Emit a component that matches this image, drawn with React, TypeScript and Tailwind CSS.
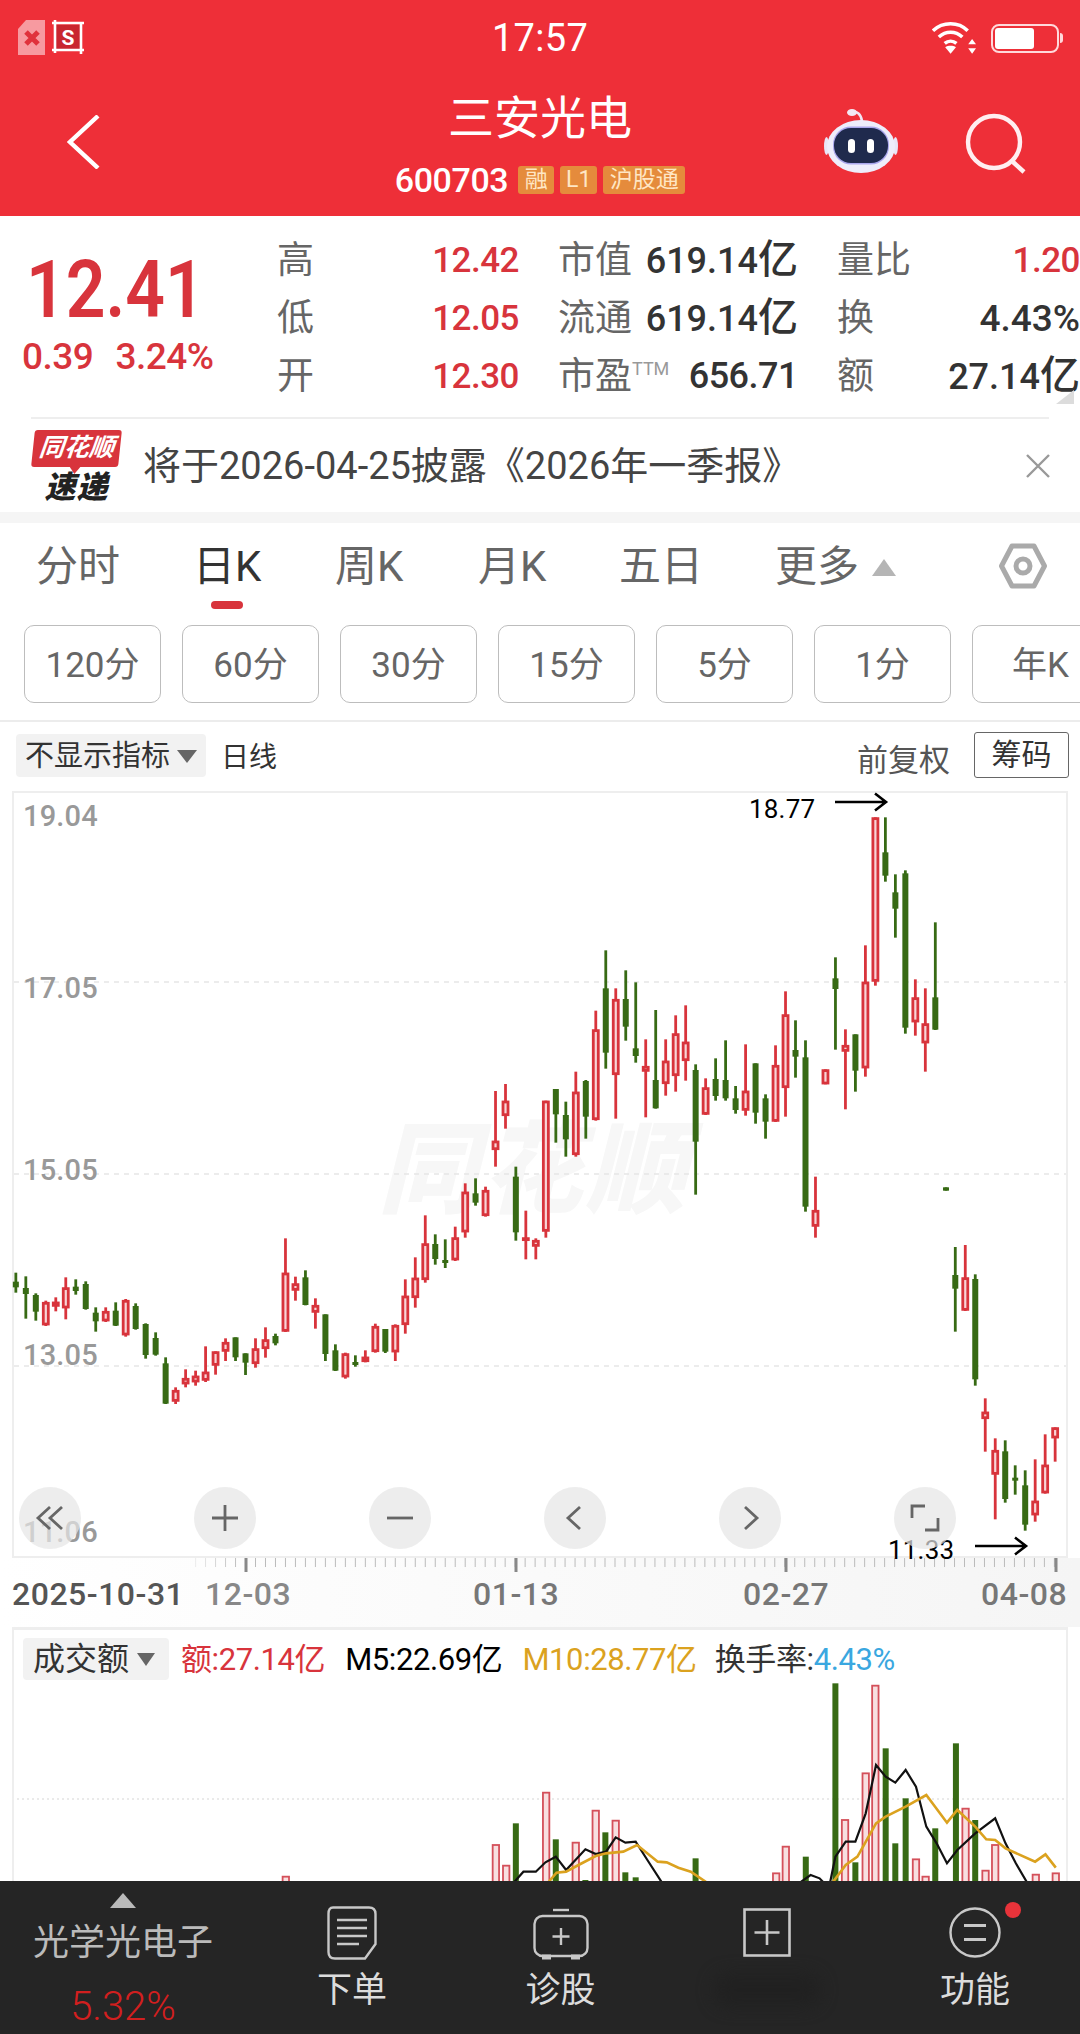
import React from "react";

type C = [number, "r" | "g", number, number, number, number];

// left part of the series, measured on the crop starting at y=1180
const A: C[] = [
  [46,"g",278,305,322,338],[75,"g",289,324,342,416],[104,"g",340,345,395,422],[133,"r",362,366,436,438],
  [162,"r",352,365,380,394],[191,"r",292,322,385,418],[220,"g",298,320,333,344],[249,"g",304,312,387,389],
  [278,"g",382,398,424,455],[307,"r",382,393,424,426],[336,"g",367,392,437,438],[365,"r",357,360,466,470],
  [394,"g",370,378,447,449],[423,"g",430,432,525,536],[452,"g",457,474,524,527],[481,"g",532,550,671,672],
  [510,"r",622,630,665,672],[539,"r",568,594,613,622],[568,"r",572,587,607,617],[597,"r",499,575,602,606],
  [626,"r",514,514,557,584],[655,"r",475,486,515,543],[684,"g",472,472,532,543],[713,"g",520,520,548,585],
  [742,"r",475,505,552,563],[771,"r",442,478,507,533],[800,"g",461,468,490,496],[829,"r",175,278,455,456],
  [858,"r",290,310,332,362],[887,"g",271,292,375,376],[916,"r",355,375,398,446],[945,"g",403,403,522,543],
  [974,"g",493,511,572,573],[1003,"r",518,520,592,596],[1032,"g",526,546,552,560],[1061,"r",511,530,546,547],
  [1090,"r",431,438,516,518],[1119,"g",447,447,515,519],[1148,"r",433,435,517,543],[1177,"r",298,347,435,461],
  [1206,"r",232,293,354,383],[1235,"r",106,190,300,308],[1264,"g",163,192,237,254],[1293,"g",178,240,247,264],
  [1322,"r",140,172,241,243],[1351,"r",10,35,157,173],[1381,"g",-5,40,68,77],[1410,"r",20,30,108,110],
  [1439,"r",-267,-118,-90,-40],[1468,"r",-288,-238,-192,-154],[1498,"g",-40,-10,157,182],[1527,"r",92,172,182,238],
  [1556,"r",175,180,200,238],
];

// right part of the series, measured on the crop starting at x=540, y=780
const B: C[] = [
  [17,"r",962,962,1355,1373],[46,"g",927,927,1003,1088],[75,"g",965,1005,1078,1130],[104,"r",875,935,1125,1130],
  [133,"g",900,903,1010,1076],[162,"r",692,748,1020,1022],[191,"g",511,625,818,866],[220,"r",625,657,885,1016],
  [249,"g",571,657,740,782],[278,"g",607,805,828,848],[307,"r",778,858,875,1012],[336,"g",690,900,985,986],
  [365,"r",778,842,912,947],[394,"r",706,760,888,935],[423,"r",676,785,843,902],[452,"g",853,870,1085,1244],
  [481,"r",895,922,1004,1005],[510,"g",835,897,948,962],[539,"g",781,900,955,962],[568,"g",918,955,990,1001],
  [597,"r",793,932,992,1007],[626,"g",850,850,998,1031],[655,"g",943,955,1025,1076],[684,"r",796,855,1025,1026],
  [713,"r",634,703,924,1010],[742,"g",721,810,830,893],[771,"g",781,832,1280,1295],[800,"r",1190,1290,1340,1373],
  [829,"r",868,868,913,913],[858,"g",532,595,627,809],[887,"r",748,795,815,988],[916,"g",763,763,872,935],
  [945,"r",496,605,865,890],[974,"r",112,112,605,617],[1003,"g",112,217,287,305],[1032,"g",283,337,386,473],
  [1061,"g",271,280,743,761],[1090,"r",598,652,727,767],[1119,"r",625,730,790,875],[1148,"g",427,652,749,750],
  [1179,"g",1222,1222,1232,1232],[1206,"g",1401,1485,1526,1655],[1235,"r",1395,1492,1592,1593],[1264,"g",1483,1497,1798,1817],
  [1293,"r",1855,1895,1917,2015],[1322,"r",1975,2010,2084,2218],[1351,"g",1981,2014,2157,2168],[1380,"g",2056,2093,2102,2144],
  [1409,"g",2071,2116,2234,2252],[1438,"r",2038,2162,2206,2225],[1467,"r",1963,2054,2140,2141],[1496,"r",1942,1942,1975,2045],
];

const RED = "#d8343c";
const GREEN = "#376a14";

function Candle({ x, t, hi, top, bot, lo }: { x: number; t: "r" | "g"; hi: number; top: number; bot: number; lo: number }) {
  const col = t === "r" ? RED : GREEN;
  return (
    <g>
      <line x1={x} x2={x} y1={hi} y2={lo} stroke={col} strokeWidth={2.8} />
      {t === "r" ? (
        <rect x={x - 2.5} y={top + 1.3} width={5} height={Math.max(bot - top - 2.6, 1)} fill="#f9d5d7" stroke={col} strokeWidth={2.8} />
      ) : (
        <rect x={x - 3} y={top} width={6} height={Math.max(bot - top, 3)} fill={col} />
      )}
    </g>
  );
}

const Chev = ({ d }: { d: string }) => (
  <svg width="30" height="30" viewBox="0 0 30 30" fill="none" stroke="#666" strokeWidth="2.8">
    <path d={d} />
  </svg>
);

function RoundBtn({ left, children }: { left: number; children: React.ReactNode }) {
  return (
    <div
      className="absolute top-[696px] flex h-[62px] w-[62px] items-center justify-center rounded-full bg-[#e6e6e6]/70"
      style={{ left: left - 31 }}
    >
      {children}
    </div>
  );
}

function Arrow({ x, y }: { x: number; y: number }) {
  return (
    <svg className="absolute" style={{ left: x, top: y - 10 }} width="54" height="20" viewBox="0 0 54 20" fill="none" stroke="#000" strokeWidth="2.6">
      <path d="M0 10H50M40 1.5L51 10L40 18.5" />
    </svg>
  );
}

function Cell({ label, value, w, valueCls }: { label: React.ReactNode; value: string; w: string; valueCls: string }) {
  const hasYi = value.endsWith("亿");
  return (
    <div className={`flex items-center justify-between ${w}`}>
      <span className="text-[37px] leading-none text-[#666]">{label}</span>
      <span className={`flex items-baseline leading-none font-medium ${valueCls}`}>
        {hasYi ? value.slice(0, -1) : value}
        {hasYi && <span className="text-[40px] leading-none">亿</span>}
      </span>
    </div>
  );
}

const PriceLabel = ({ top, children }: { top: number; children: string }) => (
  <div className="absolute left-[23px] text-[29px] leading-none font-medium tracking-[0.2px] text-[#999]" style={{ top }}>
    {children}
  </div>
);

const DateLabel = ({ left, cls, children }: { left: number; cls: string; children: string }) => (
  <div className={`absolute top-[787px] text-[32px] leading-none tracking-[0.5px] ${cls}`} style={{ left }}>
    {children}
  </div>
);

const majorTicks = [246, 516, 786, 1056];
const ticks = Array.from({ length: 105 }, (_, i) => 15.84 + 9.986 * i).filter((x) => x > 186 && x < 1062);

const volRed: [number, number][] = [[415,830],[720,735],[735,797],[793,578],[836,728],[865,632],[894,662],[1127,820],[1141,740],[1227,660],[1257,520],[1271,257],[1330,778],[1344,830],[1402,626],[1431,812],[1445,735],[1504,824],[1533,820]];
const volGreen: [number, number][] = [[749,670],[807,718],[850,840],[879,697],[908,817],[923,832],[1010,775],[1170,770],[1213,250],[1242,787],[1286,445],[1300,730],[1315,595],[1358,685],[1388,430],[1416,660]];
const pts = (a: number[][]) => a.map(([x, y]) => `${x / 1.452},${1600 + y / 3}`).join(" ");
const blackA = [[745,850],[760,815],[778,815],[792,787],[807,770],[822,810],[850,748],[865,762],[880,755],[894,712],[908,728],[923,725],[940,780],[965,860]];
const blackB = [[1160,850],[1177,825],[1190,835],[1197,850]];
const blackC = [[1205,850],[1213,770],[1228,725],[1242,725],[1257,640],[1272,495],[1286,530],[1300,548],[1315,510],[1330,560],[1345,680],[1360,730],[1375,790],[1390,750],[1416,700],[1445,655],[1460,730],[1475,790],[1492,850]];
const orangeA = [[795,850],[808,818],[822,815],[840,795],[865,768],[880,760],[905,755],[925,735],[955,785],[968,787],[985,803],[1003,815],[1028,850]];
const orangeB = [[1208,850],[1228,795],[1245,770],[1272,670],[1286,650],[1315,620],[1345,585],[1375,668],[1390,630],[1416,680],[1432,718],[1445,720],[1460,745],[1503,785],[1518,763],[1533,803]];

const intervals = ["120分", "60分", "30分", "15分", "5分", "1分", "年K"];

export default function App() {
  return (
    <div className="relative flex h-[2034px] w-[1080px] flex-col overflow-hidden bg-white font-[Roboto,'Noto_Sans_CJK_SC',sans-serif]">
      {/* header */}
      <header className="h-[216px] shrink-0 bg-[#ee2f38] text-white">
        <div className="flex h-[76px] items-center justify-between">
          <div className="flex w-[220px] items-center pl-[18px]">
            <svg width="66" height="36" viewBox="0 0 66 36">
              <path d="M8 0H27V35H0V9Z" fill="#f79aa0" />
              <path d="M8 12L20 24M20 12L8 24" stroke="#e0323c" strokeWidth="5" fill="none" />
              <rect x="37" y="5" width="26" height="25" fill="#c9262f" />
              <path d="M34 3H66M37 0V33M34 30H66M63 3V34" stroke="#fff" strokeWidth="2.6" fill="none" />
              <text x="50" y="25" fontSize="21" fontWeight="700" fill="#fff" textAnchor="middle" fontFamily="Roboto">S</text>
            </svg>
          </div>
          <div className="text-[38px] leading-none tracking-[0.3px]">17:57</div>
          <div className="flex w-[220px] items-center justify-end gap-[14px] pr-[17px]">
            <svg width="45" height="34" viewBox="0 0 46 34" fill="none" stroke="#fff" strokeWidth="3.6">
              <path d="M1 9.5C11 0 27 0 36.5 9.5" />
              <path d="M7 16C14 9.5 24 9.5 31 16" />
              <path d="M13 22.5C16.5 19.5 21.5 19.5 25 22.5" />
              <path d="M19 33L13.5 26.5C16.5 24.5 21.5 24.5 24.5 26.5Z" fill="#fff" stroke="none" />
              <path d="M41 18L37 23.5H45Z M41 33L37 27.5H45Z" fill="#fff" stroke="none" />
            </svg>
            <div className="flex items-center">
              <div className="h-[29px] w-[68px] rounded-[8px] border-[2px] border-[#ffd9db] p-[2px]">
                <div className="h-full w-[39px] rounded-[3px] bg-white" />
              </div>
              <div className="ml-[1px] h-[10px] w-[3px] rounded-r bg-[#ffd9db]" />
            </div>
          </div>
        </div>
        <div className="grid h-[140px] grid-cols-[1fr_auto_1fr]">
          <div className="pt-[39px] pl-[67px]">
            <svg width="34" height="54" viewBox="0 0 34 54" fill="none" stroke="#fff" strokeWidth="4.4">
              <path d="M31 1L3 27L31 53" />
            </svg>
          </div>
          <div className="flex flex-col items-center pt-[17px]">
            <div className="text-[46px] leading-[50px]">三安光电</div>
            <div className="mt-[23px] flex items-center">
              <span className="text-[34px] leading-[28px] font-medium tracking-[-0.4px]">600703</span>
              <div className="ml-[10px] flex gap-[6px] text-[23px] leading-[28px] text-[#ffe6c4]">
                <span className="w-[36px] rounded-[3px] bg-[#e58b3c] text-center">融</span>
                <span className="w-[37px] rounded-[3px] bg-[#e58b3c] text-center">L1</span>
                <span className="w-[82px] rounded-[3px] bg-[#e58b3c] text-center">沪股通</span>
              </div>
            </div>
          </div>
          <div className="flex justify-end pt-[32px] pr-[54px]">
            <svg width="76" height="68" viewBox="0 0 76 68" className="mr-[63px]">
              <path d="M39 13C38 6 34 3 29 4" stroke="#f1e6f4" strokeWidth="2.5" fill="none" />
              <ellipse cx="29" cy="4.5" rx="5" ry="3.5" fill="#f3e8f3" />
              <ellipse cx="3.5" cy="38" rx="2.5" ry="9" fill="#e9e5f7" />
              <ellipse cx="72.5" cy="38" rx="2.5" ry="9" fill="#e9e5f7" />
              <ellipse cx="38" cy="38.5" rx="34" ry="26.5" fill="#eeedfb" />
              <rect x="10" y="18.5" width="56" height="38" rx="18" fill="#a9a6ec" />
              <rect x="11" y="20" width="54" height="35" rx="17" fill="#1f2a4d" />
              <rect x="25" y="31" width="7" height="14" rx="3.5" fill="#fff" />
              <rect x="44" y="31" width="7" height="14" rx="3.5" fill="#fff" />
            </svg>
            <svg width="64" height="66" viewBox="0 0 64 66" fill="none" stroke="#ffeef0" strokeWidth="4.4" className="mt-[4px]">
              <circle cx="32" cy="30" r="26" />
              <path d="M51 50L62 60" />
            </svg>
          </div>
        </div>
      </header>

      {/* quote */}
      <section className="relative h-[201px] shrink-0">
        <div className="flex">
          <div className="w-[277px] shrink-0 pt-[37px]">
            <div className="ml-[26px] origin-left scale-x-[0.87] text-[80px] leading-[74px] font-semibold text-[#d8343c]">12.41</div>
            <div className="mt-[12px] ml-[22px] flex gap-[22px] text-[37px] leading-[36px] font-medium tracking-[-0.5px] text-[#d8343c]">
              <span>0.39</span>
              <span>3.24%</span>
            </div>
          </div>
          <div className="flex flex-col pt-[15px]">
            <div className="flex h-[58px] gap-[39px]">
              <Cell label="高" value="12.42" w="w-[242px]" valueCls="text-[35px] tracking-[-0.5px] text-[#d8343c]" />
              <Cell label="市值" value="619.14亿" w="w-[240px]" valueCls="text-[36px] text-[#333]" />
              <Cell label="量比" value="1.20" w="w-[243px]" valueCls="text-[35px] tracking-[-0.5px] text-[#d8343c]" />
            </div>
            <div className="flex h-[58px] gap-[39px]">
              <Cell label="低" value="12.05" w="w-[242px]" valueCls="text-[35px] tracking-[-0.5px] text-[#d8343c]" />
              <Cell label="流通" value="619.14亿" w="w-[240px]" valueCls="text-[36px] text-[#333]" />
              <Cell label="换" value="4.43%" w="w-[243px]" valueCls="text-[37px] text-[#333]" />
            </div>
            <div className="flex h-[58px] gap-[39px]">
              <Cell label="开" value="12.30" w="w-[242px]" valueCls="text-[35px] tracking-[-0.5px] text-[#d8343c]" />
              <Cell
                label={
                  <span className="flex items-start">
                    市盈<span className="mt-[2px] text-[18px] leading-none text-[#999]">TTM</span>
                  </span>
                }
                value="656.71"
                w="w-[240px]"
                valueCls="text-[36px] tracking-[-0.5px] text-[#333]"
              />
              <Cell label="额" value="27.14亿" w="w-[243px]" valueCls="text-[36px] text-[#333]" />
            </div>
          </div>
        </div>
        <div className="absolute top-[174px] right-[6px] h-0 w-0 border-b-[14px] border-l-[18px] border-b-[#dcdcdc] border-l-transparent" />
      </section>

      <div className="mx-[31px] h-[2px] shrink-0 bg-[#eeeeee]" />

      {/* notice */}
      <section className="flex h-[93px] shrink-0 items-center pl-[33px]">
        <div className="flex w-[87px] shrink-0 flex-col items-center">
          <div className="relative h-[37px] w-[87px] -skew-x-6 rounded-[3px] bg-[#d8343c] text-center text-[25px] leading-[36px] font-bold text-white italic">
            同花顺
            <div className="absolute top-[36px] left-[38px] h-0 w-0 border-x-[6px] border-t-[8px] border-x-transparent border-t-[#d8343c]" />
          </div>
          <div className="mt-[7px] text-[31px] leading-[27px] font-black tracking-[1px] text-[#222] italic">速递</div>
        </div>
        <div className="ml-[23px] text-[38px] leading-none text-[#444]">将于2026-04-25披露《2026年一季报》</div>
        <svg className="mr-[30px] ml-auto" width="24" height="24" viewBox="0 0 24 24" fill="none" stroke="#999" strokeWidth="2.4">
          <path d="M1 1L23 23M23 1L1 23" />
        </svg>
      </section>

      <div className="h-[11px] shrink-0 bg-[#f5f5f5]" />

      {/* tabs */}
      <section className="flex h-[102px] shrink-0 items-start pt-[23px] pl-[36px] text-[42px] leading-[42px] text-[#666]">
        <div className="w-[157px]">分时</div>
        <div className="relative w-[142px] text-[#333]">
          日K
          <div className="absolute top-[55px] left-[18px] h-[8px] w-[32px] rounded-full bg-[#d8343c]" />
        </div>
        <div className="w-[143px]">周K</div>
        <div className="w-[141px]">月K</div>
        <div className="w-[156px]">五日</div>
        <div className="flex items-center">
          更多
          <div className="ml-[13px] h-0 w-0 border-x-[12px] border-b-[17px] border-x-transparent border-b-[#b5b5b5]" />
        </div>
        <svg className="mt-[-3px] ml-[103px]" width="48" height="46" viewBox="0 0 48 46" fill="none" stroke="#aaa" strokeWidth="5">
          <path d="M13 3H35L45.5 23L35 43H13L2.5 23Z" strokeLinejoin="round" />
          <circle cx="24" cy="23" r="7" />
        </svg>
      </section>

      {/* intervals */}
      <section className="flex h-[78px] shrink-0 gap-[21px] overflow-hidden pl-[24px]">
        {intervals.map((t) => (
          <div key={t} className="flex h-[78px] w-[137px] shrink-0 items-center justify-center rounded-[10px] border border-[#bdbdbd] pt-[2px] text-[35px] leading-none text-[#666]">
            {t}
          </div>
        ))}
      </section>

      <div className="mt-[17px] h-[2px] shrink-0 bg-[#ececec]" />

      {/* toolbar */}
      <section className="flex h-[69px] shrink-0 items-start pt-[12px] pr-[11px] pl-[16px]">
        <div className="flex h-[43px] w-[190px] items-center justify-center gap-[7px] rounded-[4px] bg-[#f2f2f2] pt-[1px] text-[29px] leading-none text-[#333]">
          不显示指标
          <div className="h-0 w-0 border-x-[10px] border-t-[13px] border-x-transparent border-t-[#666]" />
        </div>
        <div className="ml-[15px] pt-[1px] text-[28px] leading-[45px] text-[#333]">日线</div>
        <div className="mt-[4px] ml-auto text-[31px] leading-[45px] text-[#555]">前复权</div>
        <div className="mt-[-2px] ml-[24px] flex h-[46px] w-[95px] items-center justify-center rounded-[3px] border border-[#666] text-[30px] leading-none text-[#333]">
          筹码
        </div>
      </section>

      {/* price chart */}
      <section className="relative h-[836px] shrink-0">
        <div className="mx-[12px] h-[767px] border-[2px] border-[#eeeeee]" />
        <div className="h-[69px] bg-linear-to-r from-white to-[#f5f5f5]" />
        <div className="absolute top-[330px] left-[378px] text-[100px] leading-none font-black tracking-[4px] text-[#f7f7f7] italic">同花顺</div>
        <svg className="absolute inset-0" width="1080" height="836" viewBox="0 791 1080 836">
          {[982, 1174, 1366].map((y) => (
            <line key={y} x1="14" x2="1066" y1={y} y2={y} stroke="#e6e6e6" strokeWidth="1.4" strokeDasharray="5 5" />
          ))}
          {ticks.map((x, i) => (
            <line key={i} x1={x} x2={x} y1="1558" y2="1567" stroke="#bbb" strokeWidth="1" opacity={Math.min(1, (x - 180) / 60)} />
          ))}
          {majorTicks.map((x) => (
            <rect key={x} x={x - 1.5} y="1558" width="3" height="14" fill="#888" />
          ))}
          {A.map(([x, t, hi, top, bot, lo], i) => (
            <Candle key={i} x={x / 2.904} t={t} hi={1180 + hi / 3} top={1180 + top / 3} bot={1180 + bot / 3} lo={1180 + lo / 3} />
          ))}
          {B.map(([x, t, hi, top, bot, lo], i) => (
            <Candle key={i} x={540 + x / 2.904} t={t} hi={780 + hi / 3} top={780 + top / 3} bot={780 + bot / 3} lo={780 + lo / 3} />
          ))}
        </svg>
        <PriceLabel top={11}>19.04</PriceLabel>
        <PriceLabel top={183}>17.05</PriceLabel>
        <PriceLabel top={365}>15.05</PriceLabel>
        <PriceLabel top={550}>13.05</PriceLabel>
        <PriceLabel top={727}>11.06</PriceLabel>
        <div className="absolute top-[5px] left-[749px] text-[26px] leading-none tracking-[0.2px] text-black">18.77</div>
        <Arrow x={835} y={11} />
        <div className="absolute top-[746px] left-[888px] text-[26px] leading-none tracking-[0.2px] text-black">11.33</div>
        <Arrow x={975} y={755} />

        <RoundBtn left={50}>
          <Chev d="M15 4L3 15L15 26M27 4L15 15L27 26" />
        </RoundBtn>
        <RoundBtn left={225}>
          <Chev d="M15 2V28M2 15H28" />
        </RoundBtn>
        <RoundBtn left={400}>
          <Chev d="M2 15H28" />
        </RoundBtn>
        <RoundBtn left={575}>
          <Chev d="M20 4L8 15L20 26" />
        </RoundBtn>
        <RoundBtn left={750}>
          <Chev d="M10 4L22 15L10 26" />
        </RoundBtn>
        <RoundBtn left={925}>
          <Chev d="M2 15V3H15M28 15V27H15" />
        </RoundBtn>

        <DateLabel left={12} cls="font-medium text-[#555]">2025-10-31</DateLabel>
        <DateLabel left={205} cls="font-medium text-[#888]">12-03</DateLabel>
        <DateLabel left={473} cls="font-medium text-[#777]">01-13</DateLabel>
        <DateLabel left={743} cls="font-medium text-[#777]">02-27</DateLabel>
        <DateLabel left={981} cls="font-medium text-[#777]">04-08</DateLabel>
      </section>

      {/* volume */}
      <section className="relative mx-[12px] h-[254px] shrink-0 overflow-hidden border-x-[2px] border-t-[3px] border-[#eeeeee]">
        <svg className="absolute top-[-3px] left-[-14px]" width="1080" height="254" viewBox="0 1627 1080 254">
          <line x1="12" x2="1068" y1="1799" y2="1799" stroke="#e4e4e4" strokeWidth="1.4" strokeDasharray="2 3" />
          {volGreen.map(([x, y]) => (
            <rect key={x} x={x / 1.452 - 3} y={1600 + y / 3} width="6" height="260" fill={GREEN} />
          ))}
          {volRed.map(([x, y]) => (
            <rect key={x} x={x / 1.452 - 3.2} y={1600 + y / 3} width="6.4" height="260" fill="#f8dfe0" stroke="#d4505a" strokeWidth="1.8" />
          ))}
          {[blackA, blackB, blackC].map((p, i) => (
            <polyline key={i} points={pts(p)} fill="none" stroke="#111" strokeWidth="2.2" />
          ))}
          {[orangeA, orangeB].map((p, i) => (
            <polyline key={i} points={pts(p)} fill="none" stroke="#dba21f" strokeWidth="2.6" />
          ))}
        </svg>
        <div className="relative flex items-center pt-[8px] pl-[9px] text-[31px] leading-none tracking-[-0.4px]">
          <div className="flex h-[42px] w-[146px] items-center gap-[8px] rounded-[4px] bg-[#f2f2f2] pl-[10px] text-[32px] tracking-normal text-[#333]">
            成交额
            <div className="h-0 w-0 border-x-[9px] border-t-[13px] border-x-transparent border-t-[#666]" />
          </div>
          <span className="ml-[12px] text-[#d8343c]">额:27.14亿</span>
          <span className="ml-[20px] text-black">M5:22.69亿</span>
          <span className="ml-[20px] text-[#dba21f]">M10:28.77亿</span>
          <span className="ml-[18px] text-[#333]">换手率:</span>
          <span className="text-[#3aa7e0]">4.43%</span>
        </div>
      </section>

      {/* bottom bar */}
      <footer className="flex h-[153px] shrink-0 bg-[#252525] text-[#dcdcdc]">
        <div className="flex w-[246px] flex-col items-center pt-[12px]">
          <div className="h-0 w-0 border-x-[13px] border-b-[15px] border-x-transparent border-b-[#b9b9b9]" />
          <div className="mt-[17px] text-[36px] leading-none text-[#bbb]">光学光电子</div>
          <div className="mt-[26px] text-[40px] leading-none font-light text-[#d21f1f]">5.32%</div>
        </div>
        <div className="flex w-[212px] flex-col items-center pt-[25px]">
          <svg width="50" height="54" viewBox="0 0 50 54" fill="none" stroke="#c8c8c8" strokeWidth="2.4">
            <path d="M6 1.5H42Q48.5 1.5 48.5 8V38L38 52.5H8Q1.5 52.5 1.5 46V8Q1.5 1.5 6 1.5Z" />
            <path d="M10 14H40M10 22H40M10 30H40M10 38H32" />
          </svg>
          <div className="mt-[13px] text-[35px] leading-none">下单</div>
        </div>
        <div className="flex w-[205px] flex-col items-center pt-[27px]">
          <svg width="56" height="52" viewBox="0 0 56 52" fill="none" stroke="#c8c8c8" strokeWidth="2.4">
            <path d="M20 2H36" />
            <rect x="1.5" y="8" width="53" height="40" rx="8" />
            <path d="M28 20V37M19.5 28.5H36.5" />
            <path d="M9 49H18M38 49H47" strokeWidth="5" />
          </svg>
          <div className="mt-[13px] text-[35px] leading-none">诊股</div>
        </div>
        <div className="flex w-[207px] flex-col items-center pt-[27px]">
          <svg width="48" height="49" viewBox="0 0 48 49" fill="none" stroke="#c8c8c8" strokeWidth="2.6">
            <rect x="1.5" y="1.5" width="45" height="46" />
            <path d="M24 12V37M11.5 24.5H36.5" />
          </svg>
          <div className="mt-[16px] h-[34px] w-[108px] rounded-full bg-[#212121] blur-sm" />
        </div>
        <div className="relative flex w-[210px] flex-col items-center pt-[26px]">
          <svg width="52" height="51" viewBox="0 0 52 51" fill="none" stroke="#c8c8c8" strokeWidth="2.4">
            <ellipse cx="26" cy="25.5" rx="24.5" ry="24" />
            <path d="M15 18.5H37M15 32.5H37" strokeWidth="3" />
          </svg>
          <div className="mt-[15px] text-[35px] leading-none">功能</div>
          <div className="absolute top-[21px] left-[135px] h-[16px] w-[16px] rounded-full bg-[#e8333a]" />
        </div>
      </footer>
    </div>
  );
}
